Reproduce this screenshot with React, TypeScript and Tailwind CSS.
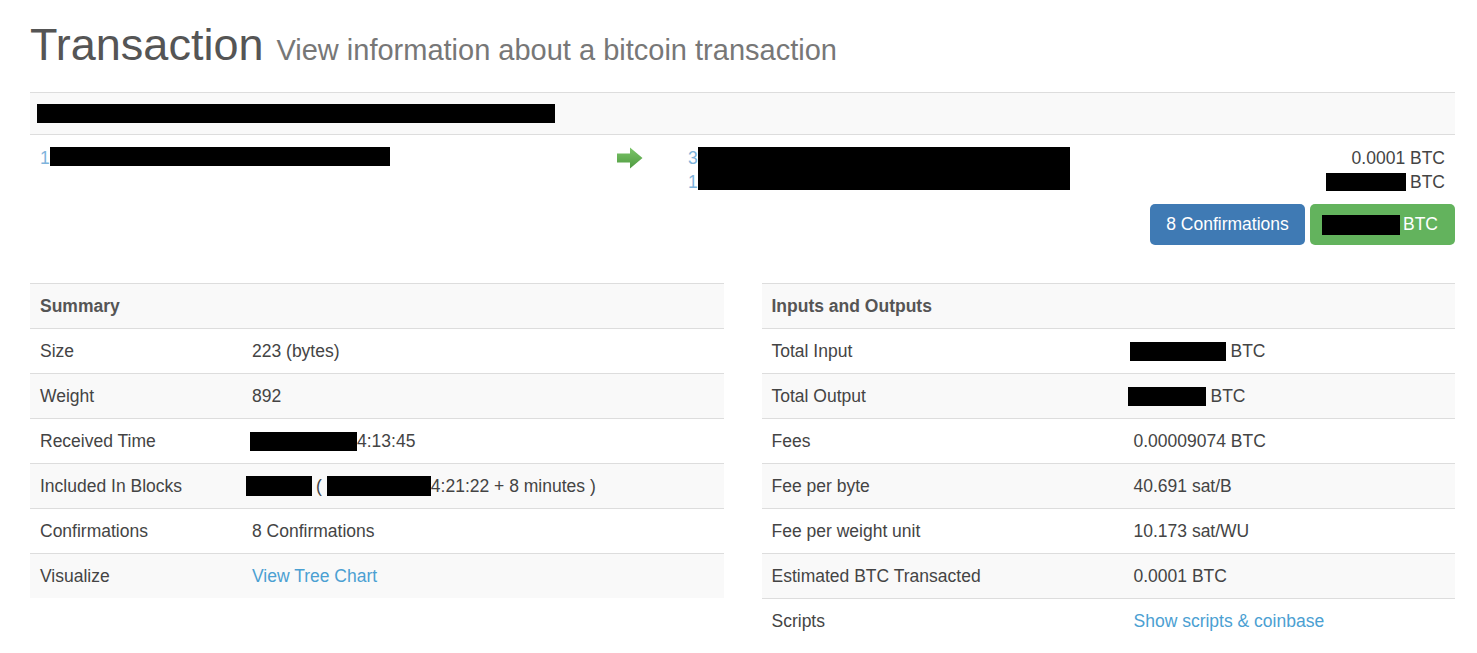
import React from 'react';

// Redaction block, as it appears in the screenshot
const Redact: React.FC<{ w: number; h: number; className?: string }> = ({ w, h, className = '' }) => (
  <span className={`inline-block bg-black align-middle ${className}`} style={{ width: w, height: h }} />
);

const GreenArrow = () => (
  <svg width="26" height="22" viewBox="0 0 26 22">
    <defs>
      <linearGradient id="ga" x1="0" y1="0" x2="0" y2="1">
        <stop offset="0" stopColor="#7cc66a" />
        <stop offset="1" stopColor="#4f9a40" />
      </linearGradient>
    </defs>
    <path d="M0 6.5 H13 V0.5 L25.5 11 L13 21.5 V15.5 H0 Z" fill="url(#ga)" />
  </svg>
);

type Row = { label: string; value: React.ReactNode };

const InfoTable: React.FC<{ title: string; rows: Row[]; labelW: string }> = ({ title, rows, labelW }) => (
  <div className="border-t border-[#dddddd]">
    <div className="h-[44px] flex items-center px-[10px] bg-[#f9f9f9] font-bold text-[#555]">{title}</div>
    {rows.map((r, i) => (
      <div
        key={r.label}
        className={`h-[45px] flex items-center border-t border-[#dddddd] ${i % 2 === 1 ? 'bg-[#f9f9f9]' : 'bg-white'}`}
      >
        <div className={`${labelW} shrink-0 px-[10px]`}>{r.label}</div>
        <div className="flex items-center">{r.value}</div>
      </div>
    ))}
  </div>
);

export default function App() {
  const link = 'text-[#4ba0d2]';

  const summary: Row[] = [
    { label: 'Size', value: '223 (bytes)' },
    { label: 'Weight', value: '892' },
    {
      label: 'Received Time',
      value: (
        <>
          <Redact w={107} h={19} className="-ml-[2px]" />
          <span>4:13:45</span>
        </>
      ),
    },
    {
      label: 'Included In Blocks',
      value: (
        <>
          <Redact w={66} h={20} className="-ml-[6px]" />
          <span className="ml-[4px]">(</span>
          <Redact w={104} h={20} className="ml-[5px]" />
          <span>4:21:22 + 8 minutes )</span>
        </>
      ),
    },
    { label: 'Confirmations', value: '8 Confirmations' },
    { label: 'Visualize', value: <span className={link}>View Tree Chart</span> },
  ];

  const io: Row[] = [
    {
      label: 'Total Input',
      value: (
        <>
          <Redact w={96} h={19} className="-ml-[4px]" />
          <span className="ml-[5px]">BTC</span>
        </>
      ),
    },
    {
      label: 'Total Output',
      value: (
        <>
          <Redact w={78} h={19} className="-ml-[6px]" />
          <span className="ml-[5px]">BTC</span>
        </>
      ),
    },
    { label: 'Fees', value: '0.00009074 BTC' },
    { label: 'Fee per byte', value: '40.691 sat/B' },
    { label: 'Fee per weight unit', value: '10.173 sat/WU' },
    { label: 'Estimated BTC Transacted', value: '0.0001 BTC' },
    { label: 'Scripts', value: <span className={link}>Show scripts &amp; coinbase</span> },
  ];

  return (
    <div className="min-h-screen bg-white font-['Liberation_Sans',Arial,sans-serif] text-[17.5px] text-[#444] pl-[30px] pr-[22px]">
      {/* Page title */}
      <div className="pt-[20px] h-[92px] whitespace-nowrap">
        <span className="text-[45px] leading-[1.1] text-[#555]">Transaction</span>
        <span className="ml-[13px] text-[29px] text-[#777]">View information about a bitcoin transaction</span>
      </div>

      {/* Transaction hash */}
      <div className="h-[43px] border-y border-[#dddddd] bg-[#f9f9f9] flex items-center px-[7px]">
        <Redact w={518} h={19} />
      </div>

      {/* Inputs -> outputs */}
      <div className="flex pt-[11px] px-[10px] leading-[24px]">
        <div className="w-[577px] shrink-0 flex items-start">
          <span className="text-[#7eb4dc]">1</span>
          <Redact w={340} h={19} className="mt-[1px]" />
        </div>
        <div className="w-[71px] shrink-0 pt-[1px]">
          <GreenArrow />
        </div>
        <div className="flex-1 flex items-start">
          <div className="flex flex-col text-[#7eb4dc]">
            <span>3</span>
            <span>1</span>
          </div>
          <Redact w={372} h={43} className="mt-[1px]" />
        </div>
        <div className="flex flex-col items-end">
          <span>0.0001 BTC</span>
          <span className="flex items-center">
            <Redact w={80} h={18} />
            <span className="ml-[4px]">BTC</span>
          </span>
        </div>
      </div>

      <div className="flex justify-end gap-[5px] mt-[10px]">
        <div className="h-[41px] w-[155px] rounded-[5px] bg-[#3f7ab4] text-white flex items-center justify-center">
          8 Confirmations
        </div>
        <div className="h-[41px] w-[145px] rounded-[5px] bg-[#63b35d] text-white flex items-center pl-[12px]">
          <Redact w={78} h={20} />
          <span className="ml-[3px]">BTC</span>
        </div>
      </div>

      {/* Tables */}
      <div className="grid grid-cols-2 gap-[38px] mt-[38px]">
        <InfoTable title="Summary" rows={summary} labelW="w-[222px]" />
        <InfoTable title="Inputs and Outputs" rows={io} labelW="w-[372px]" />
      </div>
    </div>
  );
}
